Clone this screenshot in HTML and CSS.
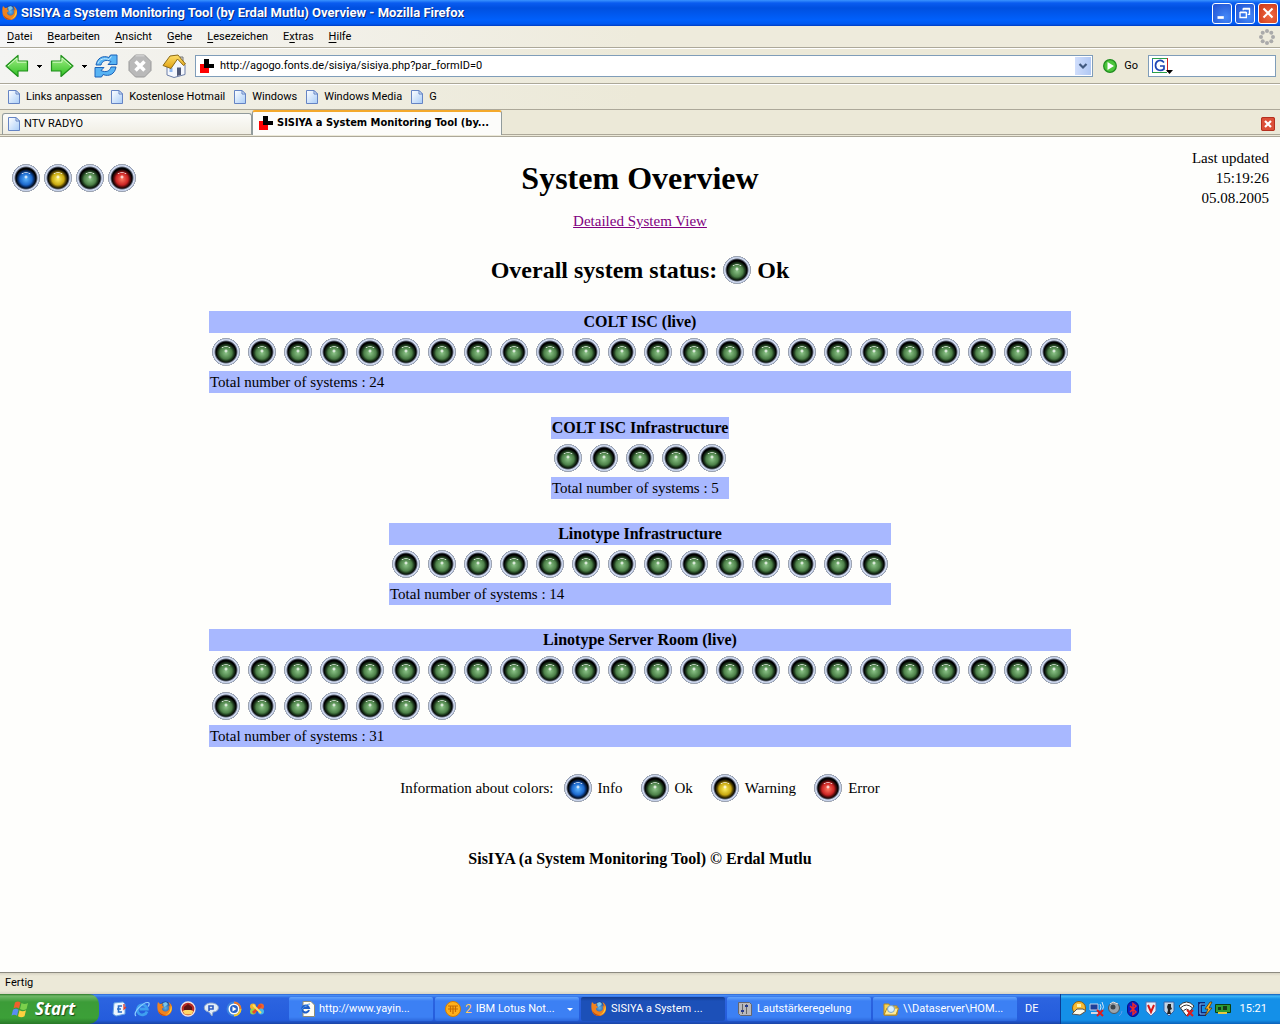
FILE: index.html
```
<!DOCTYPE html>
<html lang="de">
<head>
<meta charset="utf-8">
<meta name="viewport" content="width=device-width, initial-scale=1">
<title>SISIYA a System Monitoring Tool (by Erdal Mutlu) Overview</title>
<link rel="stylesheet" href="styles.css">
</head>
<body>
<svg class="sprite" aria-hidden="true">
  <defs>
    <linearGradient id="g-arrow" x1="0" y1="0" x2="0" y2="1"><stop offset="0" stop-color="#a6f08a"/><stop offset="1" stop-color="#2fbf22"/></linearGradient>
    <linearGradient id="g-page" x1="0" y1="0" x2="1" y2="1"><stop offset="0" stop-color="#fff"/><stop offset="1" stop-color="#a9cdf8"/></linearGradient>
    <linearGradient id="g-roof" x1="0" y1="0" x2="0" y2="1"><stop offset="0" stop-color="#ffe06a"/><stop offset="1" stop-color="#e0a010"/></linearGradient>
    <radialGradient id="g-globe"><stop offset="0" stop-color="#5fb4ea"/><stop offset="1" stop-color="#173f95"/></radialGradient>
  </defs>
  <symbol id="firefox" viewBox="0 0 16 16">
    <circle cx="8.500" cy="7" r="6.500" fill="url(#g-globe)"/>
    <path d="M6 2l3-1 2 2-2 2-2 1z" fill="#7ac6ea"/>
    <path d="M1 1l2 2 3-.5-1 2 2 1.500-2 1.500c0 3 4 4 6 2 1.500-1.500 1-3 .5-4.500l1 .5c.5-2-.5-3.500-1.500-4.500 3 1 4.500 4 4 7.500-.6 4-3.500 6.500-7 6.500-4 0-7.200-3-7.500-7C.2 5 .3 3 1 1z" fill="#f0821e"/>
    <path d="M14 4.500c2 4-.5 9-5.500 9.500 4-1.500 5-5 5.500-9.500z" fill="#fbd03c"/>
    <path d="M1.500 9c1 3.500 4 5 8 5-4 2-8-1-8-5z" fill="#c04810"/>
  </symbol>
  <symbol id="page" viewBox="0 0 12 14">
    <path d="M.5.500h7.500l3.500 3.500v9.500H.5z" fill="url(#g-page)" stroke="#6584c4"/>
    <path d="M8 .5V4h3.500z" fill="#e9f3ff" stroke="#6584c4"/>
  </symbol>
  <symbol id="cross" viewBox="0 0 14 14">
    <path d="M0 5h9v9H0z" fill="#f00"/><path d="M4 0h5v5h5v4H4z" fill="#000"/>
  </symbol>
  <symbol id="arrow" viewBox="0 0 24 24">
    <path d="M1 12L13 1.500V7h9.500v10H13v5.500z" fill="url(#g-arrow)" stroke="#20901c" stroke-width="1.200" stroke-linejoin="round"/>
    <path d="M3 12l9-8v4.200h9.300" fill="none" stroke="#d4fac6"/>
  </symbol>
  <symbol id="ie" viewBox="0 0 16 16">
    <path d="M13 10.500A5 5 0 1 1 13.200 8H5.500" fill="none" stroke="#3fa0f0" stroke-width="2.800"/>
    <path d="M2 15C-2 12 9 1 14 1.500c2 .3 1 3 0 4" fill="none" stroke="#8fd0ff" stroke-width="1.200"/>
  </symbol>
</svg>

<header class="titlebar">
  <svg class="i16" aria-hidden="true"><use href="#firefox"/></svg>
  <span class="titlebar-text">SISIYA a System Monitoring Tool (by Erdal Mutlu) Overview - Mozilla Firefox</span>
  <div class="window-buttons">
    <button class="win-btn" aria-label="Minimieren"><svg viewBox="0 0 20 20"><path d="M5 13.500h7v3H5z" fill="#fff"/></svg></button>
    <button class="win-btn" aria-label="Wiederherstellen"><svg viewBox="0 0 20 20" fill="none" stroke="#fff"><path d="M8 7V5.500h7v6h-2M8 5h7.500M4.500 9.500h7v5.500h-7zM4.500 9h7" stroke-width="1.500"/></svg></button>
    <button class="win-btn win-close" aria-label="Schließen"><svg viewBox="0 0 20 20"><path d="M5 5l10 10M15 5L5 15" stroke="#fff" stroke-width="2.200"/></svg></button>
  </div>
</header>

<nav class="menubar">
  <button><u>D</u>atei</button>
  <button><u>B</u>earbeiten</button>
  <button><u>A</u>nsicht</button>
  <button><u>G</u>ehe</button>
  <button><u>L</u>esezeichen</button>
  <button>E<u>x</u>tras</button>
  <button><u>H</u>ilfe</button>
  <svg class="throbber" viewBox="0 0 16 16" fill="#aaa" aria-hidden="true"><circle cx="8" cy="2" r="2"/><circle cx="12.300" cy="3.700" r="2"/><circle cx="14" cy="8" r="2"/><circle cx="12.300" cy="12.300" r="2"/><circle cx="8" cy="14" r="2"/><circle cx="3.700" cy="12.300" r="2"/><circle cx="2" cy="8" r="2"/><circle cx="3.700" cy="3.700" r="2"/></svg>
</nav>

<div class="toolbar">
  <div class="nav-buttons">
    <button aria-label="Zurück"><svg class="i24"><use href="#arrow"/></svg></button>
    <button class="drop" aria-label="Verlauf zurück"></button>
    <button aria-label="Vor"><svg class="i24 flip"><use href="#arrow"/></svg></button>
    <button class="drop" aria-label="Verlauf vor"></button>
  </div>
  <button aria-label="Neu laden"><svg class="i24" viewBox="0 0 24 24" fill="#58b4f4" stroke="#1c62b8" stroke-linejoin="round"><path d="M2 11C3 4 9 1 15 3.500l1.500-2.500 6.500 0v9.500h-9l3-3C12 5 8 7 7 11z"/><path d="M22 13c-1 7-7 10-13 7.500L7.500 23H1v-9.500h9l-3 3c5 2.500 9 .5 10-3.500z"/><path d="M4 9.500c1-4 6-6 11-4l2.500-3" fill="none" stroke="#c9ecff"/></svg></button>
  <button aria-label="Stopp"><svg class="i24" viewBox="0 0 24 24"><path d="M7.500 1h9L23 7.500v9L16.500 23h-9L1 16.500v-9z" fill="#b9b9b9" stroke="#999"/><path d="M7.500 1.800h9" stroke="#ddd"/><path d="M7.500 7.500l9 9M16.500 7.500l-9 9" stroke="#fff" stroke-width="3.500"/></svg></button>
  <button aria-label="Startseite"><svg class="i24" viewBox="0 0 24 24"><path d="M5 10v11l7 2.500 11-3V11L16 4z" fill="#f4f7fd" stroke="#6d7fa8"/><path d="M15 13.500h4v7.500l-4 1z" fill="#505a78"/><path d="M7.500 14h3v4h-3z" fill="#8fb6ee"/><path d="M18 3h3v6l-3-3z" fill="#ddd" stroke="#777"/><path d="M1 11.500L8 2l8-1 7.500 9-2 1.500L15.500 5 9 14.500z" fill="url(#g-roof)" stroke="#8c6a16"/></svg></button>
  <label class="address">
    <svg class="i14" aria-hidden="true"><use href="#cross"/></svg>
    <input type="text" aria-label="Adresse" value="http://agogo.fonts.de/sisiya/sisiya.php?par_formID=0">
    <button class="address-drop" aria-label="Adressliste"><svg viewBox="0 0 16 18"><path d="M4.500 7L8 10.500 11.500 7" fill="none" stroke="#41597f" stroke-width="2.200"/></svg></button>
  </label>
  <button class="go"><svg class="i14" viewBox="0 0 14 14" aria-hidden="true"><circle cx="7" cy="7" r="6.300" fill="#4cc63c" stroke="#1f8c1e" stroke-width="1.300"/><path d="M4.500 3v8L11 7z" fill="#fff"/></svg>Go</button>
  <label class="search">
    <svg viewBox="0 0 22 18" aria-hidden="true"><path d="M.5 15.500V1.500" stroke="#2a5ad0"/><path d="M0 1.500h15" stroke="#2aa048"/><path d="M15.500 1v14" stroke="#d02020"/><path d="M0 15.500h15" stroke="#2aa048"/><path d="M12 5.500C8.500 1.500 3.500 4 3.500 8.500s5 6.500 8.500 3.500V9H8" fill="none" stroke="#1f45b4" stroke-width="1.700"/><path d="M14 13h7l-3.500 4z"/></svg>
    <input type="text" aria-label="Suche">
  </label>
</div>

<nav class="bookmarks">
  <a href="#links"><svg class="pg"><use href="#page"/></svg>Links anpassen</a>
  <a href="#hotmail"><svg class="pg"><use href="#page"/></svg>Kostenlose Hotmail</a>
  <a href="#windows"><svg class="pg"><use href="#page"/></svg>Windows</a>
  <a href="#media"><svg class="pg"><use href="#page"/></svg>Windows Media</a>
  <a href="#g"><svg class="pg"><use href="#page"/></svg>G</a>
</nav>

<div class="tabs">
  <button class="tab"><svg class="pg"><use href="#page"/></svg>NTV RADYO</button>
  <button class="tab tab-active"><svg class="i14"><use href="#cross"/></svg>SISIYA a System Monitoring Tool (by...</button>
  <button class="tab-close" aria-label="Tab schließen"><svg viewBox="0 0 14 14"><path d="M4 4l6 6M10 4l-6 6" stroke="#fff" stroke-width="2.200"/></svg></button>
</div>

<main class="page">
  <div class="page-head">
    <div class="corner-orbs"><i class="orb info"></i><i class="orb warning"></i><i class="orb ok"></i><i class="orb error"></i></div>
    <h1>System Overview</h1>
    <p class="updated">Last updated<br>15:19:26<br>05.08.2005</p>
  </div>
  <p class="detail"><a href="#detail">Detailed System View</a></p>
  <h2>Overall system status: <i class="orb ok"></i> Ok</h2>

  <section class="group">
    <h3>COLT ISC (live)</h3>
    <ul data-count="24"></ul>
    <p>Total number of systems : 24</p>
  </section>
  <section class="group">
    <h3>COLT ISC Infrastructure</h3>
    <ul data-count="5"></ul>
    <p>Total number of systems : 5</p>
  </section>
  <section class="group">
    <h3>Linotype Infrastructure</h3>
    <ul data-count="14"></ul>
    <p>Total number of systems : 14</p>
  </section>
  <section class="group">
    <h3>Linotype Server Room (live)</h3>
    <ul data-count="31"></ul>
    <p>Total number of systems : 31</p>
  </section>

  <div class="legend">
    <span class="legend-title">Information about colors:</span>
    <span><i class="orb info"></i>Info</span>
    <span><i class="orb ok"></i>Ok</span>
    <span><i class="orb warning"></i>Warning</span>
    <span><i class="orb error"></i>Error</span>
  </div>
  <p class="credit">SisIYA (a System Monitoring Tool) © Erdal Mutlu</p>
</main>

<div class="statusbar">Fertig</div>

<footer class="taskbar">
  <button class="start"><svg viewBox="0 0 18 18" aria-hidden="true"><path d="M4 2.500q3-2 5.500 0L8 8.500q-3-2-5.500 0z" fill="#f0602c"/><path d="M10.500 3q3 2 6.500 0l-1.500 6q-3 2-6.500 0z" fill="#7cd04c"/><path d="M2 9.800q3-2 5.500 0L6 15.800q-3-2-5.500 0z" fill="#5a8cf4"/><path d="M8.500 10.300q3 2 6.500 0l-1.500 6q-3 2-6.500 0z" fill="#fcd040"/></svg>Start</button>
  <div class="quick">
    <button aria-label="Outlook Express"><svg class="i16" viewBox="0 0 16 16"><path d="M3 2l9-1 2 2v10l-9 2-3-2z" fill="#eef6ff" stroke="#6aa4e0"/><path d="M11 5H7.500v6H11M6 8h4" fill="none" stroke="#2a6ec8" stroke-width="1.600"/><path d="M13 3v5l2-2" fill="none" stroke="#e03c2c" stroke-width="1.300"/></svg></button>
    <button aria-label="Internet Explorer"><svg class="i16"><use href="#ie"/></svg></button>
    <button aria-label="Firefox"><svg class="i16"><use href="#firefox"/></svg></button>
    <button aria-label="Mozilla"><svg class="i16" viewBox="0 0 16 16"><circle cx="8" cy="8" r="7" fill="#b92b24" stroke="#f4e4e0" stroke-width="1.300"/><path d="M2.500 10q5-3 11 0l-2 3.500H5z" fill="#ffd868"/><path d="M4 6l4-3 4 3v3H4z" fill="#5c1512"/></svg></button>
    <button aria-label="RealPlayer"><svg class="i16" viewBox="0 0 16 16"><path d="M8 2c10 0 9 9 2 9l-1 4-3-4C-1 10 0 2 8 2z" fill="#e2ecf8" stroke="#8fa6c8"/><path d="M6 10V5h4v3H6" fill="none" stroke="#2c5ac0" stroke-width="1.600"/></svg></button>
    <button aria-label="Media Player"><svg class="i16" viewBox="0 0 16 16"><circle cx="8" cy="8" r="6.500" fill="#fff" stroke="#3c84e0" stroke-width="2"/><path d="M8 1.500A6.500 6.500 0 0 1 14.500 8" fill="none" stroke="#f07824" stroke-width="2"/><path d="M14.500 8A6.500 6.500 0 0 1 8 14.500" fill="none" stroke="#f4c828" stroke-width="2"/><circle cx="8" cy="8" r="4" fill="#2a64c8"/><path d="M6.500 5.500v5l4-2.500z" fill="#fff"/></svg></button>
    <button aria-label="Lotus"><svg class="i16" viewBox="0 0 16 16"><circle cx="4" cy="5.500" r="3" fill="#f8b428"/><circle cx="12" cy="5.500" r="3" fill="#f0642c"/><circle cx="4" cy="10.500" r="3" fill="#9cd048"/><circle cx="12" cy="10.500" r="3" fill="#48b8e8"/><path d="M4 12L12 4" stroke="#e84828" stroke-width="3"/><path d="M4 4l8 8" stroke="#fbe064" stroke-width="2"/></svg></button>
  </div>
  <div class="tasks">
    <button class="task"><svg class="i16" viewBox="0 0 16 16"><path d="M4 .5h8l3.500 3.500v11.500H4z" fill="#fffef4" stroke="#8c8c78"/><path d="M10 9A3.500 3.500 0 1 1 10 7H4" fill="none" stroke="#1f5fc8" stroke-width="2"/><path d="M1 13C0 10 7 3 11 3" fill="none" stroke="#3c8ce8"/></svg>http://www.yayin...</button>
    <button class="task"><svg class="i16" viewBox="0 0 16 16"><circle cx="8" cy="8" r="7.500" fill="#ffb01c" stroke="#d47c00"/><path d="M3 5h10M3 8h10M5.500 5v6M8 5v8M10.500 5v6" stroke="#c86c00" stroke-width="1.200"/></svg><b class="count">2</b>IBM Lotus Not...<span class="caret"></span></button>
    <button class="task task-active"><svg class="i16"><use href="#firefox"/></svg>SISIYA a System ...</button>
    <button class="task"><svg class="i16" viewBox="0 0 16 16"><path d="M1.500 1.500h11l2 2v11h-11l-2-2z" fill="#b8b8bc" stroke="#65656d"/><path d="M5.500 3v10M9.500 3v10" stroke="#666"/><path d="M4 9h3v2H4zM8 4h3v2H8z" fill="#263a8c"/></svg>Lautstärkeregelung</button>
    <button class="task"><svg class="i16" viewBox="0 0 16 16"><path d="M1 3h5l1 2h7v9H1z" fill="#f6d458" stroke="#b88a18"/><path d="M4 7h11.500L13 14H1z" fill="#ffeb98" stroke="#b88a18"/><circle cx="8" cy="8" r="3.500" fill="#d8f0ff" stroke="#7aa4c4"/></svg>\\Dataserver\HOM...</button>
  </div>
  <span class="lang">DE</span>
  <div class="tray">
    <svg class="i16" viewBox="0 0 16 16"><circle cx="8" cy="7" r="6.500" fill="#f8bc34" stroke="#8c5e0c"/><path d="M1 13l5-5 6 0 3 2-6 4z" fill="#fffbe8" stroke="#555"/><path d="M6 3h4v3H6z" fill="#fff3b0"/></svg>
    <svg class="i16" viewBox="0 0 16 16"><path d="M1 3h8v6H1z" fill="#1f3f98" stroke="#c8d4e8"/><path d="M2 12h7" stroke="#d8d8e0" stroke-width="2"/><path d="M11 3q2 3 0 6M13 1q3 5 0 9" fill="none" stroke="#cde4fa"/><path d="M8 9l6 6M14 9l-6 6" stroke="#e01c1c" stroke-width="2"/></svg>
    <svg class="i16" viewBox="0 0 16 16"><circle cx="7" cy="7" r="5.500" fill="#9ca4ac" stroke="#4c545c"/><circle cx="6" cy="6" r="2.500" fill="#3c444c"/><path d="M3 3l3-2 5 2" stroke="#eee" fill="none"/><path d="M12 15q3-2 3-5" fill="none" stroke="#5c9cf0"/></svg>
    <svg class="i16" viewBox="0 0 16 16"><rect x="2.500" y=".5" width="11" height="15" rx="5.500" fill="#0c1cc8" stroke="#06107c"/><path d="M5 5l6 6-3 2.500V2.500L11 5l-6 6" fill="none" stroke="#f02828" stroke-width="1.500"/></svg>
    <svg class="i16" viewBox="0 0 16 16"><path d="M3 1h10v9l-5 5-5-5z" fill="#e8eef8" stroke="#4c74b8"/><path d="M5 4l3 7 3-7" fill="none" stroke="#d81818" stroke-width="2"/></svg>
    <svg class="i16" viewBox="0 0 16 16"><path d="M3 1h10v9l-5 5-5-5z" fill="#c4d4e4" stroke="#3464a8"/><path d="M7 3h3v3l1 2-2 1 1 4H6l1-4-1-3z" fill="#222"/></svg>
    <svg class="i16" viewBox="0 0 16 16"><path d="M7.500 15L0 5q7.500-8 15 0z" fill="#fff" stroke="#333"/><path d="M2 6.500q5.500-5 11 0M4.500 9.500q3-3 6 0" fill="none" stroke="#333"/><path d="M8 9l6 6M14 9l-6 6" stroke="#e01c1c" stroke-width="2"/></svg>
    <svg class="i16" viewBox="0 0 16 16"><path d="M8 3H3v10h6" fill="none" stroke="#0c2878" stroke-width="4"/><path d="M8 3H3v10h6" fill="none" stroke="#7cc0fa"/><path d="M13 1L8 8h3l-3 7 7-8h-3l3-6z" fill="#ffb428" stroke="#4c2c00" stroke-width=".7"/></svg>
    <svg class="i16" viewBox="0 0 16 16"><path d="M.5 3.500h15v8H.5z" fill="#2c9c34" stroke="#0c4010"/><path d="M3 6h3v3H3zM8 5h4v4H8z" fill="#143c18"/><path d="M3 12h9" stroke="#e8c840" stroke-width="2"/></svg>
    <time>15:21</time>
  </div>
</footer>
<script src="systems.js"></script>
</body>
</html>
```
FILE: styles.css
```
* { box-sizing: border-box; }

body {
  margin: 0;
  min-height: 100vh;
  display: flex;
  flex-direction: column;
  background: #fefefc;
  color: #000;
  font: 11px/16px Roboto, Tahoma, sans-serif;
}

button, input { font: inherit; color: inherit; }
button { border: 0; padding: 0; background: none; white-space: nowrap; }
svg { display: block; flex: none; }

.sprite { position: absolute; width: 0; height: 0; }
.i14 { width: 14px; height: 14px; }
.i16 { width: 16px; height: 16px; }
.i24 { width: 24px; height: 24px; }
.pg { width: 12px; height: 14px; }
.flip { transform: scaleX(-1); }

/* Window frame */
.titlebar {
  display: flex;
  align-items: center;
  gap: 3px;
  height: 26px;
  padding: 0 2px;
  background: linear-gradient(#3a94ff 0, #0a5cf0 3px, #0050e0 8px, #0060fc 20px, #0058f0 24px, #003cc0 26px);
  color: #fff;
  font: bold 13px/20px Roboto, sans-serif;
  text-shadow: 1px 1px #0a2a80;
}
.titlebar-text { flex: 1; white-space: nowrap; overflow: hidden; }
.window-buttons { display: flex; gap: 3px; }
.win-btn {
  width: 20px;
  height: 21px;
  border: 1px solid #fff;
  border-radius: 3px;
  background: radial-gradient(circle at 70% 70%, #4488f8, #1f50d0);
}
.win-close { background: radial-gradient(circle at 60% 60%, #f06c44, #cc3414); }

.menubar {
  display: flex;
  align-items: center;
  gap: 15px;
  height: 22px;
  padding: 0 5px 0 7px;
  background: linear-gradient(90deg, #f6f6f6, #eeebdc 50%);
  border-bottom: 1px solid #aca899;
}
.menubar u { text-underline-offset: 2px; }
.throbber { width: 16px; height: 16px; margin-left: auto; }

.toolbar {
  display: flex;
  align-items: center;
  gap: 10px;
  height: 36px;
  padding: 0 4px 0 5px;
  background: linear-gradient(90deg, #f4f4f2, #ece9d8 50%);
  border-top: 1px solid #fff;
  border-bottom: 1px solid #aca899;
}
.nav-buttons { display: flex; align-items: center; gap: 6px; margin-right: -5px; }
.nav-buttons .drop {
  width: 9px;
  height: 24px;
  background: linear-gradient(#000, #000) 2px 11px / 5px 1px no-repeat, linear-gradient(#000, #000) 3px 12px / 3px 1px no-repeat, linear-gradient(#000, #000) 4px 13px / 1px 1px no-repeat;
}
.address, .search {
  display: flex;
  align-items: center;
  height: 22px;
  background: #fff;
  border: 1px solid #7f9db9;
}
.address { flex: 1; gap: 6px; padding: 0 1px 0 4px; margin-left: -1px; }
.address input, .search input { flex: 1; min-width: 0; border: 0; padding: 0; background: none; outline: 0; }
.address-drop { width: 16px; height: 18px; background: linear-gradient(90deg, #d0defc, #b0c8f4); }
.go { display: flex; align-items: center; gap: 7px; }
.search { width: 128px; padding-left: 3px; }
.search svg { width: 22px; height: 18px; }

.bookmarks {
  display: flex;
  align-items: center;
  gap: 9px;
  height: 26px;
  padding-left: 8px;
  background: linear-gradient(90deg, #f2f1ea, #ece9d8 50%);
  border-top: 1px solid #fff;
  border-bottom: 1px solid #aca899;
}
.bookmarks a { display: flex; align-items: center; gap: 6px; color: #000; text-decoration: none; white-space: nowrap; }

.tabs {
  display: flex;
  align-items: flex-end;
  height: 27px;
  padding: 0 5px 2px 2px;
  background: linear-gradient(#ece9d8 24px, #aca899 24px, #aca899 25px, #ece9d8 25px, #ece9d8 26px, #aca899 26px);
}
.tab {
  display: flex;
  align-items: center;
  gap: 4px;
  width: 250px;
  height: 22px;
  padding: 0 5px;
  background: linear-gradient(#fcfcfa, #f0eee4);
  border: 1px solid #919b9c;
  border-bottom-color: #aca899;
  border-radius: 3px 3px 0 0;
}
.tab-active {
  height: 25px;
  padding: 0 6px 2px;
  background: #fcfcfa;
  border-top: 2px solid #f4a92c;
  border-bottom: 0;
  font-family: "DejaVu Sans Condensed", "DejaVu Sans", sans-serif;
  font-weight: bold;
}
.tab-close {
  width: 14px;
  height: 14px;
  margin: 0 0 4px auto;
  background: #dc5038;
  border-radius: 2px;
  outline: 1px solid #b43020;
  outline-offset: -1px;
}

/* Monitoring page */
.page {
  flex: 1;
  padding: 11px 11px 0;
  font: 15px/20px "Liberation Serif", "Times New Roman", serif;
}
.page p, .page h1, .page h2, .page h3 { margin: 0; }
.page-head { display: grid; grid-template-columns: 1fr auto 1fr; align-items: center; }
.page h1 { font-size: 32px; line-height: 36px; }
.updated { text-align: right; }
.corner-orbs { display: flex; gap: 4px; padding-left: 1px; }
.detail { padding-top: 3px; text-align: center; }
.detail a { color: #800080; }
.page h2 {
  display: flex;
  justify-content: center;
  align-items: center;
  gap: 6px;
  padding: 24px 0 26px;
  font-size: 24px;
  line-height: 30px;
  font-weight: bold;
}

.orb {
  display: block;
  flex: none;
  width: 28px;
  height: 28px;
  border-radius: 50%;
  background:
    radial-gradient(circle at 14px 13px, #fff 0, #fff9 1px, transparent 2px),
    radial-gradient(ellipse 6px 4px at 14px 12px, transparent 70%, #fffc 85%, transparent 100%) 0 0 / 28px 10px no-repeat,
    radial-gradient(circle at 14px 15px, var(--light) 0, var(--mid) 6px, var(--dark) 8px, transparent 10px),
    radial-gradient(circle at 14px 14px, #000 10px, #5c6474 11px, #dce4f8 12px, #b8c4dc 13px, #747a84 14px, transparent 14px);
}
.ok { --light: #8cc488; --mid: #4c8048; --dark: #1c381c; }
.info { --light: #5cb4ff; --mid: #1c68cc; --dark: #082c64; }
.warning { --light: #fff060; --mid: #c8a810; --dark: #544404; }
.error { --light: #ff7860; --mid: #cc2424; --dark: #580c0c; }

.group { width: fit-content; max-width: 862px; margin: 0 auto 24px; }
.group h3, .group p { background: #a8b8ff; line-height: 22px; }
.group h3 { font-size: 16px; text-align: center; }
.group p { padding-left: 1px; }
.group ul { display: flex; flex-wrap: wrap; gap: 2px; margin: 0; padding: 2px 0; list-style: none; }
.group li { padding: 3px; }

.legend { display: flex; justify-content: center; flex-wrap: wrap; gap: 18px; line-height: 30px; padding-top: 2px; }
.legend span { display: flex; align-items: center; gap: 6px; }
.legend .legend-title { margin-right: -8px; }
.credit { padding-top: 46px; text-align: center; font-size: 16px; font-weight: bold; }

/* Bottom bars */
.statusbar {
  height: 22px;
  padding: 2px 5px;
  background: linear-gradient(#d8d4c4, #ece9d8 3px 18px, #d8d4c4);
  border-top: 1px solid #8c8a80;
}
.taskbar {
  display: flex;
  align-items: stretch;
  height: 30px;
  background: linear-gradient(#1f50c0 0, #4c94f8 1px, #2c64e0 4px, #245cdc 26px, #1a44a4 30px);
  color: #fff;
}
.start {
  display: flex;
  align-items: center;
  gap: 6px;
  width: 99px;
  padding-left: 11px;
  background: linear-gradient(#2c7828 0, #70b868 2px, #3c9c38 8px, #3ca038 24px, #287828 30px);
  border-radius: 0 10px 10px 0;
  font: italic bold 17px/24px "Open Sans", sans-serif;
  text-shadow: 1px 1px 1px #1c4c18;
}
.start svg { width: 18px; height: 18px; }
.quick { display: flex; align-items: center; gap: 7px; padding-left: 12px; }
.tasks { display: flex; flex: 1; gap: 2px; padding: 3px 0 3px 24px; }
.task {
  display: flex;
  align-items: center;
  gap: 4px;
  flex: 0 1 144px;
  min-width: 0;
  overflow: hidden;
  padding: 0 2px 0 10px;
  border-radius: 2px;
  background: linear-gradient(#64a4fc 0, #3c80f4 4px, #3c80f4 20px, #2c68dc);
}
.task-active { background: linear-gradient(#123c90, #1c50b8 4px); }
.count { color: #ffc868; font-size: 12px; font-weight: normal; }
.caret { margin: 0 4px 0 auto; border: 3px solid transparent; border-top-color: #fff; border-bottom: 0; }
.lang { align-self: center; padding: 0 21px 0 4px; }
.tray {
  display: flex;
  align-items: center;
  gap: 2px;
  padding: 0 13px 0 10px;
  background: linear-gradient(#0c58b8 0, #40b8f8 2px, #1490e8 5px, #1490e8 26px, #0c60b8 30px);
  border-left: 1px solid #0c3c94;
}
.tray time { margin-left: 7px; }
```
FILE: systems.js
```
// Fill each group with one status light per monitored system.
document.querySelectorAll("ul[data-count]").forEach(function (list) {
  for (var i = 0; i < Number(list.dataset.count); i++) {
    var item = document.createElement("li");
    var orb = document.createElement("i");
    orb.className = "orb ok";
    item.appendChild(orb);
    list.appendChild(item);
  }
});
```
